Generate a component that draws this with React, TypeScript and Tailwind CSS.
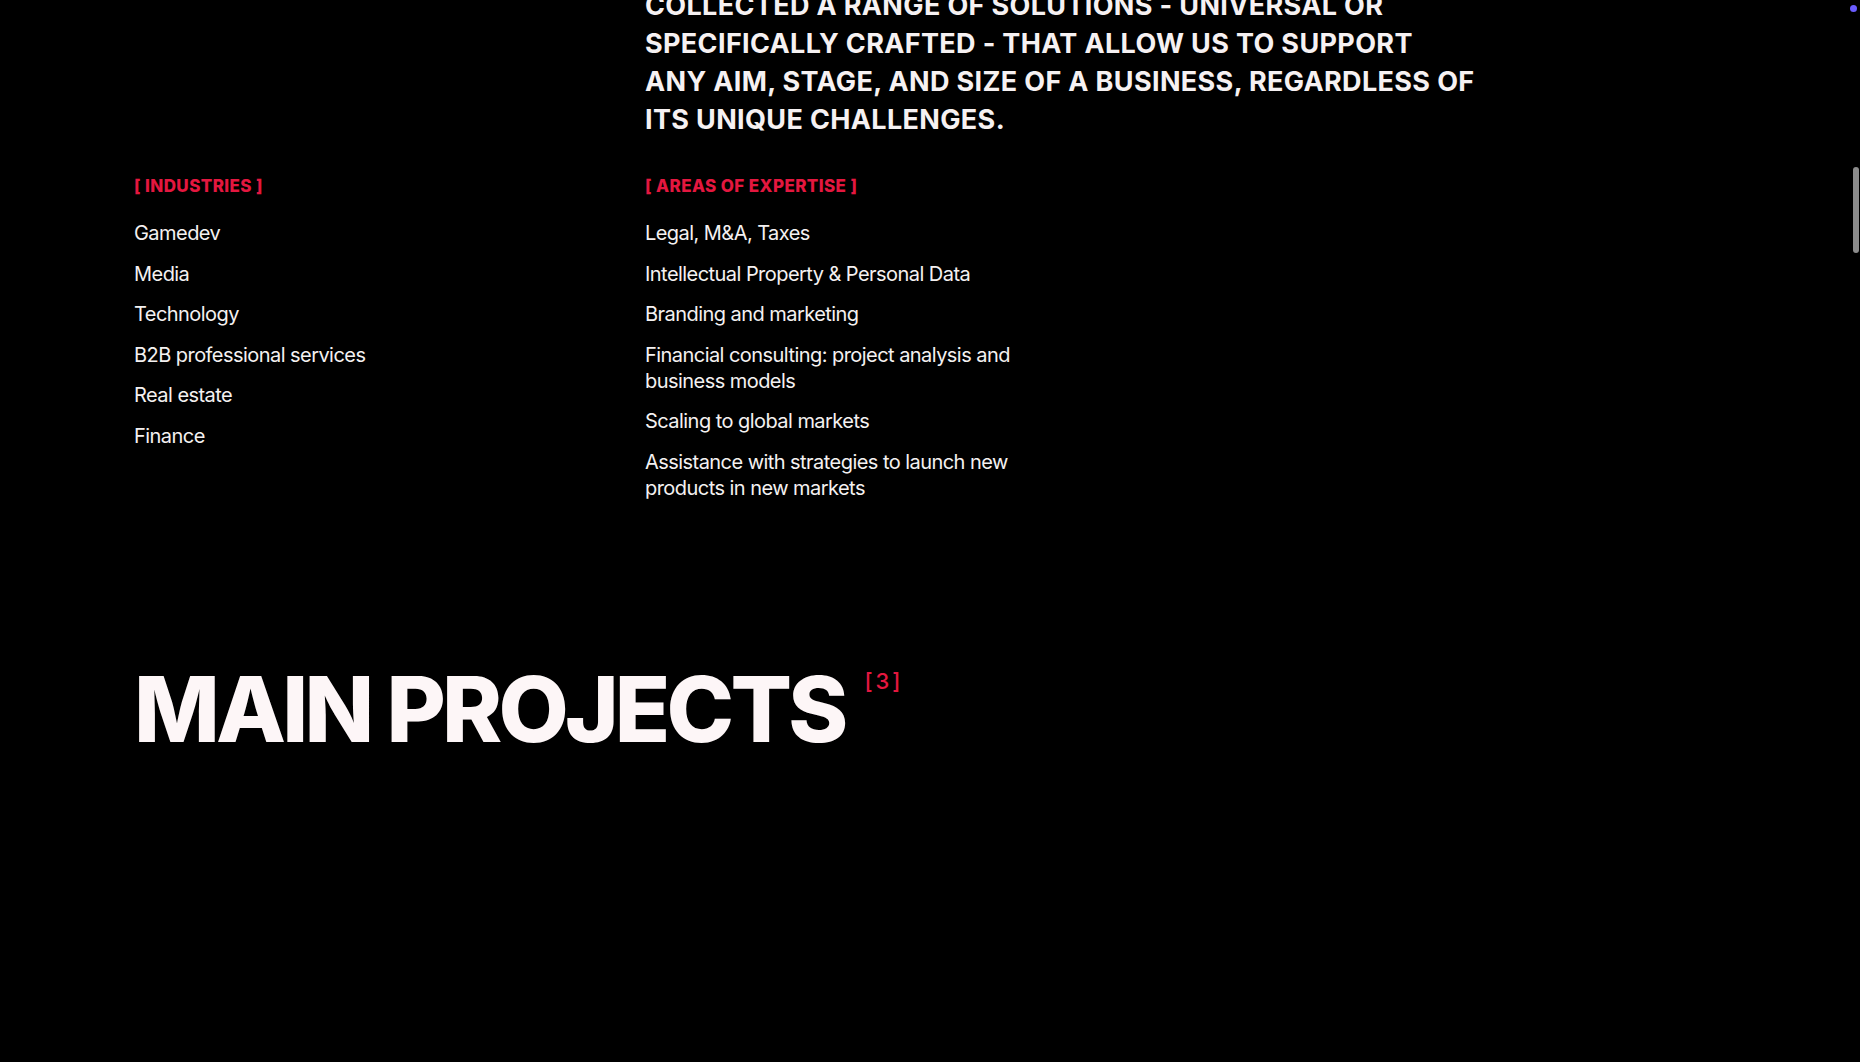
import React from "react";

const industries = [
  "Gamedev",
  "Media",
  "Technology",
  "B2B professional services",
  "Real estate",
  "Finance",
];

const expertise = [
  "Legal, M&A, Taxes",
  "Intellectual Property & Personal Data",
  "Branding and marketing",
  "Financial consulting: project analysis and business models",
  "Scaling to global markets",
  "Assistance with strategies to launch new products in new markets",
];

function Label({ children }: { children: React.ReactNode }) {
  return (
    <div className="h-[20px] text-[17px] leading-[20px] font-extrabold uppercase text-[#e4173f] tracking-[0.4px]">
      {children}
    </div>
  );
}

function List({ items, width }: { items: string[]; width: string }) {
  return (
    <ul className={`mt-[24px] flex flex-col gap-[14.5px] ${width}`}>
      {items.map((t) => (
        <li key={t} className="text-[20px] leading-[26px] text-[#f4f1f1] tracking-[-0.55px]">
          {t}
        </li>
      ))}
    </ul>
  );
}

export default function App() {
  return (
    <div
      className="relative h-screen w-full overflow-hidden bg-black text-white"
      style={{ fontFamily: "Inter, 'Noto Sans', sans-serif" }}
    >
      <div className="pl-[134px]">
        <div className="-mt-[13px] pl-[511px]">
          <p className="text-[27px] leading-[38px] font-bold uppercase text-[#f6f1f2] tracking-[0.35px]">
            <span className="block">Collected a range of solutions - universal or</span>
            <span className="block">specifically crafted - that allow us to support</span>
            <span className="block">any aim, stage, and size of a business, regardless of</span>
            <span className="block">its unique challenges.</span>
          </p>
        </div>

        <div className="mt-[37px] grid grid-cols-[511px_1fr]">
          <div>
            <Label>[ Industries ]</Label>
            <List items={industries} width="w-[400px]" />
          </div>
          <div>
            <Label>[ Areas of expertise ]</Label>
            <List items={expertise} width="w-[380px]" />
          </div>
        </div>

        <div className="mt-[163px] flex items-start">
          <h2 className="text-[91px] leading-[91px] font-extrabold uppercase text-[#fdf6f7] tracking-[-3.8px]">
            Main Projects
          </h2>
          <span className="ml-[20px] mt-[4px] text-[22px] leading-[26px] font-medium text-[#e4173f] tracking-[3px]">
            [3]
          </span>
        </div>
      </div>

      <div className="absolute right-[1px] top-[167px] h-[86px] w-[6px] rounded-full bg-[#8c8c8c]" />
      <div className="absolute right-[3px] top-[5px] h-[7px] w-[7px] rounded-full bg-[#6a5cff]" />
    </div>
  );
}
